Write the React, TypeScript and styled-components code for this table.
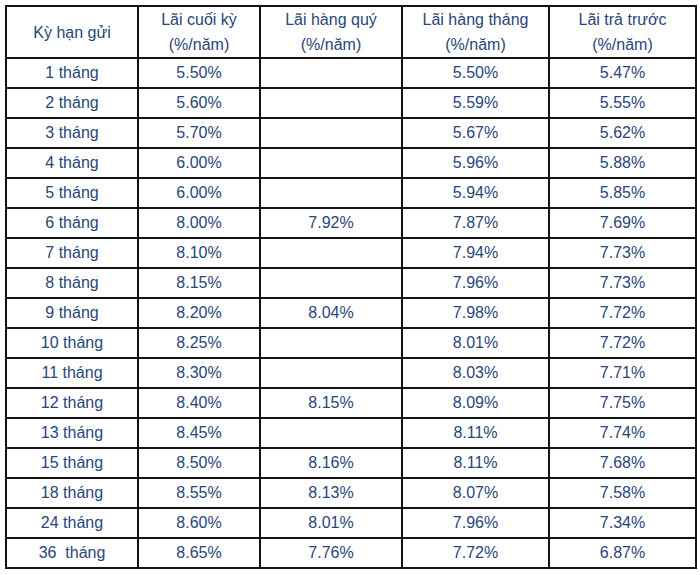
import styled, { createGlobalStyle } from 'styled-components';

const GlobalStyle = createGlobalStyle`
  html, body {
    margin: 0;
    padding: 0;
    background: #ffffff;
  }
  body {
    font-family: "Liberation Sans", Arial, sans-serif;
  }
`

const Page = styled.div`
  padding: 5px 0 0 5px;
`

const RateTable = styled.table`
  border-collapse: collapse;
  table-layout: fixed;
  width: 690px;
  color: #27467a;
  font-size: 16px;
`

const HeadCell = styled.th`
  border: 2px solid #151515;
  padding: 0;
  font-weight: normal;
  text-align: center;
  vertical-align: middle;
  line-height: 25px;
`

const Cell = styled.td`
  border: 2px solid #151515;
  height: 28px;
  padding: 0;
  text-align: center;
  vertical-align: middle;
  white-space: pre;
`

interface Row {
  term: string;
  end: string;
  quarter: string;
  month: string;
  prepaid: string;
}

const rows: Row[] = [
  { term: '1 tháng', end: '5.50%', quarter: '', month: '5.50%', prepaid: '5.47%' },
  { term: '2 tháng', end: '5.60%', quarter: '', month: '5.59%', prepaid: '5.55%' },
  { term: '3 tháng', end: '5.70%', quarter: '', month: '5.67%', prepaid: '5.62%' },
  { term: '4 tháng', end: '6.00%', quarter: '', month: '5.96%', prepaid: '5.88%' },
  { term: '5 tháng', end: '6.00%', quarter: '', month: '5.94%', prepaid: '5.85%' },
  { term: '6 tháng', end: '8.00%', quarter: '7.92%', month: '7.87%', prepaid: '7.69%' },
  { term: '7 tháng', end: '8.10%', quarter: '', month: '7.94%', prepaid: '7.73%' },
  { term: '8 tháng', end: '8.15%', quarter: '', month: '7.96%', prepaid: '7.73%' },
  { term: '9 tháng', end: '8.20%', quarter: '8.04%', month: '7.98%', prepaid: '7.72%' },
  { term: '10 tháng', end: '8.25%', quarter: '', month: '8.01%', prepaid: '7.72%' },
  { term: '11 tháng', end: '8.30%', quarter: '', month: '8.03%', prepaid: '7.71%' },
  { term: '12 tháng', end: '8.40%', quarter: '8.15%', month: '8.09%', prepaid: '7.75%' },
  { term: '13 tháng', end: '8.45%', quarter: '', month: '8.11%', prepaid: '7.74%' },
  { term: '15 tháng', end: '8.50%', quarter: '8.16%', month: '8.11%', prepaid: '7.68%' },
  { term: '18 tháng', end: '8.55%', quarter: '8.13%', month: '8.07%', prepaid: '7.58%' },
  { term: '24 tháng', end: '8.60%', quarter: '8.01%', month: '7.96%', prepaid: '7.34%' },
  { term: '36  tháng', end: '8.65%', quarter: '7.76%', month: '7.72%', prepaid: '6.87%' },
]

export default function App() {
  return (
    <Page>
      <GlobalStyle />
      <RateTable>
        <colgroup>
          <col style={{ width: 132 }} />
          <col style={{ width: 122 }} />
          <col style={{ width: 142 }} />
          <col style={{ width: 147 }} />
          <col style={{ width: 147 }} />
        </colgroup>
        <thead>
          <tr>
            <HeadCell>Kỳ hạn gửi</HeadCell>
            <HeadCell>Lãi cuối kỳ<br />(%/năm)</HeadCell>
            <HeadCell>Lãi hàng quý<br />(%/năm)</HeadCell>
            <HeadCell>Lãi hàng tháng<br />(%/năm)</HeadCell>
            <HeadCell>Lãi trả trước<br />(%/năm)</HeadCell>
          </tr>
        </thead>
        <tbody>
          {rows.map((r) => (
            <tr key={r.term}>
              <Cell>{r.term}</Cell>
              <Cell>{r.end}</Cell>
              <Cell>{r.quarter}</Cell>
              <Cell>{r.month}</Cell>
              <Cell>{r.prepaid}</Cell>
            </tr>
          ))}
        </tbody>
      </RateTable>
    </Page>
  )
}
